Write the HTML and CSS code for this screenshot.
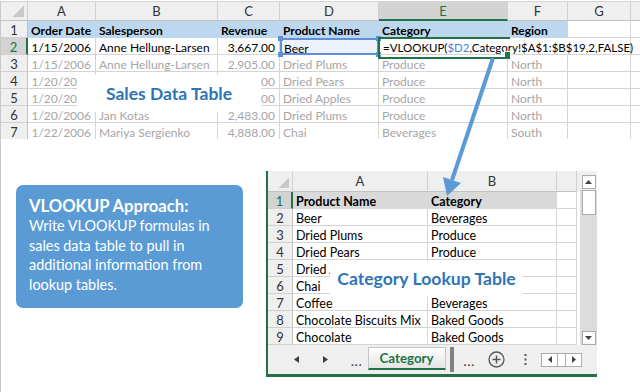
FILE: index.html
```html
<!DOCTYPE html>
<html lang="en">
<head>
  <meta charset="UTF-8">
  <title>VLOOKUP Approach</title>
  <link rel="stylesheet" href="styles.css">
</head>
<body>
  <div class="page">
    <!-- Sales data sheet -->
    <div class="sheet">
      <div class="h corner"></div><div class="h">A</div><div class="h">B</div><div class="h">C</div><div class="h">D</div><div class="h on">E</div><div class="h">F</div><div class="h">G</div><div class="h"></div>

      <div class="rh">1</div><div class="c t">Order Date</div><div class="c t">Salesperson</div><div class="c t">Revenue</div><div class="c t">Product Name</div><div class="c t">Category</div><div class="c t">Region</div><div class="c"></div><div class="c"></div>

      <div class="rh on">2</div><div class="c r">1/15/2006</div><div class="c">Anne Hellung-Larsen</div><div class="c r">3,667.00</div><div class="c ref">Beer</div><div class="c edit">=VLOOKUP(<span class="arg">$D2</span>,Category!$A$1:$B$19,2,FALSE)</div><div class="c"></div>

      <div class="rh">3</div><div class="c r g">1/15/2006</div><div class="c g">Anne Hellung-Larsen</div><div class="c r g">2,905.00</div><div class="c g">Dried Plums</div><div class="c g">Produce</div><div class="c g">North</div><div class="c"></div><div class="c"></div>

      <div class="rh">4</div><div class="c r g">1/20/2006</div><div class="c g">Jan Kotas</div><div class="c r g">4,683.00</div><div class="c g">Dried Pears</div><div class="c g">Produce</div><div class="c g">North</div><div class="c"></div><div class="c"></div>

      <div class="rh">5</div><div class="c r g">1/20/2006</div><div class="c g">Jan Kotas</div><div class="c r g">3,200.00</div><div class="c g">Dried Apples</div><div class="c g">Produce</div><div class="c g">North</div><div class="c"></div><div class="c"></div>

      <div class="rh">6</div><div class="c r g">1/20/2006</div><div class="c g">Jan Kotas</div><div class="c r g">2,483.00</div><div class="c g">Dried Plums</div><div class="c g">Produce</div><div class="c g">North</div><div class="c"></div><div class="c"></div>

      <div class="rh">7</div><div class="c r g">1/22/2006</div><div class="c g">Mariya Sergienko</div><div class="c r g">4,888.00</div><div class="c g">Chai</div><div class="c g">Beverages</div><div class="c g">South</div><div class="c"></div><div class="c"></div>
    </div>

    <div class="bottom">
      <!-- Callout -->
      <div class="callout">
        <div class="callout-title">VLOOKUP Approach:</div>
        <p>Write VLOOKUP formulas in<br>sales data table to pull in<br>additional information from<br>lookup tables.</p>
      </div>

      <!-- Lookup sheet window -->
      <div class="lookup">
        <div class="lk-main">
          <div class="lk-grid">
            <div class="h corner"></div><div class="h">A</div><div class="h">B</div><div class="h"></div>
            <div class="rh on">1</div><div class="c lt">Product Name</div><div class="c lt">Category</div><div class="c"></div>
            <div class="rh">2</div><div class="c">Beer</div><div class="c">Beverages</div><div class="c"></div>
            <div class="rh">3</div><div class="c">Dried Plums</div><div class="c">Produce</div><div class="c"></div>
            <div class="rh">4</div><div class="c">Dried Pears</div><div class="c">Produce</div><div class="c"></div>
            <div class="rh">5</div><div class="c">Dried Apples</div><div class="c">Produce</div><div class="c"></div>
            <div class="rh">6</div><div class="c">Chai</div><div class="c">Beverages</div><div class="c"></div>
            <div class="rh">7</div><div class="c">Coffee</div><div class="c">Beverages</div><div class="c"></div>
            <div class="rh">8</div><div class="c">Chocolate Biscuits Mix</div><div class="c">Baked Goods</div><div class="c"></div>
            <div class="rh">9</div><div class="c">Chocolate</div><div class="c">Baked Goods</div><div class="c"></div>
          </div>
          <div class="vscroll">
            <div class="track">
              <div class="sb-btn"><svg width="7" height="4" viewBox="0 0 7 4"><path d="M0 4 L3.5 0 L7 4 Z" fill="#444"/></svg></div>
              <div class="thumb"></div>
              <div class="sb-btn down"><svg width="7" height="4" viewBox="0 0 7 4"><path d="M0 0 L3.5 4 L7 0 Z" fill="#444"/></svg></div>
            </div>
          </div>
        </div>
        <div class="tabs">
          <svg class="nav-l" width="5" height="7" viewBox="0 0 5 7"><path d="M5 0 L0 3.5 L5 7 Z" fill="#404040"/></svg>
          <svg class="nav-r" width="5" height="7" viewBox="0 0 5 7"><path d="M0 0 L5 3.5 L0 7 Z" fill="#404040"/></svg>
          <span class="dots d1">...</span>
          <div class="tab">Category</div>
          <div class="tab-bar"></div>
          <span class="dots d2">...</span>
          <svg class="add" width="17" height="17" viewBox="0 0 17 17"><circle cx="8.5" cy="8.5" r="7.5" fill="none" stroke="#555" stroke-width="1.3"/><path d="M8.5 4.5 V12.5 M4.5 8.5 H12.5" stroke="#555" stroke-width="1.4"/></svg>
          <svg class="more" width="3" height="11" viewBox="0 0 3 11"><rect x="0.5" y="0" width="2" height="2" fill="#555"/><rect x="0.5" y="4.5" width="2" height="2" fill="#555"/><rect x="0.5" y="9" width="2" height="2" fill="#555"/></svg>
          <div class="hscroll">
            <div class="hs-cell"><svg width="4" height="7" viewBox="0 0 4 7"><path d="M4 0 L0 3.5 L4 7 Z" fill="#444"/></svg></div>
            <div class="hs-mid"></div>
            <div class="hs-cell"><svg width="4" height="7" viewBox="0 0 4 7"><path d="M0 0 L4 3.5 L0 7 Z" fill="#444"/></svg></div>
          </div>
        </div>
      </div>
    </div>

    <!-- Labels laid over the sheets -->
    <div class="label sales-label">Sales Data Table</div>
    <div class="label lookup-label">Category Lookup Table</div>

    <svg class="arrow" width="640" height="392" viewBox="0 0 640 392">
      <line x1="493" y1="57" x2="452" y2="179" stroke="#5b9bd5" stroke-width="4"/>
      <polygon points="447,195 461,182 443,176" fill="#5b9bd5"/>
    </svg>
  </div>
</body>
</html>
```

FILE: styles.css
```css
* {
  margin: 0;
  padding: 0;
  box-sizing: border-box;
}

body {
  width: 640px;
  height: 392px;
  overflow: hidden;
  background: #fff;
  font-family: Lato, "Liberation Sans", sans-serif;
  font-size: 12px;
  color: #000;
}

.page {
  position: relative;
  width: 640px;
  height: 392px;
  border-left: 1px solid #c8c8c8;
}

/* Sheet grids */
.sheet {
  display: grid;
  grid-template-columns: 27px 68px 122px 62px 99px 129px 60px 63px 10px;
  grid-template-rows: 19px repeat(7, 17px);
  height: 138px;
  margin-top: 1px;
  border-top: 1px solid #d4d4d4;
  overflow: hidden;
}

.h {
  background: #efefef;
  border-right: 1px solid #d0d0d0;
  border-bottom: 1px solid #c2c2c2;
  text-align: center;
  font-size: 13px;
  line-height: 18px;
  color: #333;
}

.h.on {
  background: #d3d3d3;
  color: #217346;
  border-bottom: 2px solid #217346;
}

.corner {
  background: linear-gradient(135deg, transparent 50%, #c9c9c9 50%) no-repeat right 3px bottom 3px / 11px 11px, #efefef;
}

.rh {
  background: #efefef;
  border-right: 1px solid #c2c2c2;
  border-bottom: 1px solid #d0d0d0;
  text-align: center;
  font-size: 13px;
  line-height: 16px;
  padding-top: 1px;
  color: #333;
}

.rh.on {
  background: #d3d3d3;
  color: #217346;
  border-right: 2px solid #217346;
}

.c {
  border-right: 1px solid #d4d4d4;
  border-bottom: 1px solid #d4d4d4;
  padding: 2px 3px 0;
  line-height: 16px;
  white-space: nowrap;
}

.c.r {
  text-align: right;
  padding-right: 4px;
}

.c.g {
  color: #a6a6a6;
}

.c.t {
  background: #bdd7ee;
  border-color: #bdd7ee;
  font-weight: bold;
}

.c.ref {
  position: relative;
  background: #edf2fa;
  border: 2px solid #5e8fd8;
  padding: 1px 2px 0;
}

.c.ref::before {
  content: "";
  position: absolute;
  inset: -4px;
  background:
    linear-gradient(#5e8fd8, #5e8fd8) left top / 5px 5px no-repeat,
    linear-gradient(#5e8fd8, #5e8fd8) right top / 5px 5px no-repeat,
    linear-gradient(#5e8fd8, #5e8fd8) left bottom / 5px 5px no-repeat,
    linear-gradient(#5e8fd8, #5e8fd8) right bottom / 5px 5px no-repeat;
}

.c.edit {
  grid-column: span 3;
  position: relative;
  padding-left: 4px;
  font-size: 11.5px;
}

.c.edit::after {
  content: "";
  position: absolute;
  left: -1px;
  top: -1px;
  width: 130px;
  height: 18px;
  border: 2px solid #217346;
  border-right: none;
}

.c.edit::before {
  content: "";
  position: absolute;
  left: 125px;
  top: 13px;
  width: 5px;
  height: 5px;
  background: #217346;
  border: 1px solid #fff;
}

.arg {
  color: #4a86d8;
}

/* Bottom part */
.bottom {
  display: flex;
  align-items: flex-start;
  gap: 23px;
  margin-top: 32px;
  padding-left: 15px;
}

.callout {
  width: 227px;
  height: 123px;
  margin-top: 14px;
  padding: 11px 13px;
  background: #5b9bd5;
  border-radius: 7px;
  color: #fff;
}

.callout-title {
  font-size: 16.6px;
  font-weight: bold;
  line-height: 20px;
}

.callout p {
  font-size: 14.4px;
  line-height: 19.5px;
}

.lookup {
  width: 331px;
  border-left: 2px solid #217346;
  border-bottom: 3px solid #217346;
}

.lk-main {
  display: flex;
}

.lk-grid {
  display: grid;
  grid-template-columns: 25px 135px 129px 20px;
  grid-template-rows: 21px repeat(9, 17px);
  font-size: 12.5px;
}

.lk-grid .h {
  font-size: 13px;
  line-height: 20px;
}

.c.lt {
  background: #d9d9d9;
  border-color: #d9d9d9;
  font-weight: bold;
}

.vscroll {
  width: 20px;
  padding-left: 3px;
  background: linear-gradient(#efefef 21px, #fff 21px);
}

.track {
  height: 100%;
  display: flex;
  flex-direction: column;
  align-items: center;
  padding-top: 4px;
  background: linear-gradient(transparent 19px, #dcdcdc 19px);
}

.sb-btn {
  width: 14px;
  height: 14px;
  background: #fff;
  border: 1px solid #ababab;
  display: flex;
  align-items: center;
  justify-content: center;
}

.sb-btn.down {
  margin-top: auto;
}

.thumb {
  width: 14px;
  height: 25px;
  margin-top: 1px;
  background: #fff;
  border: 1px solid #ababab;
}

/* Sheet tabs */
.tabs {
  display: flex;
  align-items: center;
  height: 29px;
  background: #efefef;
}

.nav-l {
  margin-left: 26px;
}

.nav-r {
  margin-left: 24px;
}

.dots {
  font-weight: bold;
  font-size: 12px;
  color: #444;
  letter-spacing: 1px;
  padding-top: 4px;
}

.d1 {
  margin-left: 23px;
}

.tab {
  align-self: flex-start;
  margin-top: 2px;
  margin-left: 5px;
  width: 78px;
  height: 23px;
  background: linear-gradient(#ffffff, #e4e4e4);
  border: 1px solid #c6c6c6;
  border-bottom: 2px solid #217346;
  color: #217346;
  font-weight: bold;
  font-size: 13.3px;
  text-align: center;
  line-height: 20px;
}

.tab-bar {
  width: 4px;
  height: 25px;
  margin-left: 4px;
  background: #808080;
}

.d2 {
  margin-left: 10px;
}

.add {
  margin-left: 13px;
}

.more {
  margin-left: 19px;
}

.hscroll {
  display: flex;
  margin-left: 14px;
  height: 14px;
  border: 1px solid #ababab;
  background: #fff;
}

.hs-cell {
  width: 15px;
  display: flex;
  align-items: center;
  justify-content: center;
}

.hs-mid {
  width: 9px;
  border-left: 1px solid #ababab;
  border-right: 1px solid #ababab;
}

/* Overlay labels */
.label {
  position: absolute;
  background: #fff;
  color: #2e75b6;
  font-weight: bold;
  display: flex;
  align-items: center;
  justify-content: center;
}

.sales-label {
  left: 76px;
  top: 74px;
  width: 184px;
  height: 37px;
  font-size: 17.5px;
}

.lookup-label {
  left: 329px;
  top: 260px;
  width: 193px;
  height: 35px;
  font-size: 17.6px;
}

.arrow {
  position: absolute;
  left: -1px;
  top: 0;
  pointer-events: none;
}
```
